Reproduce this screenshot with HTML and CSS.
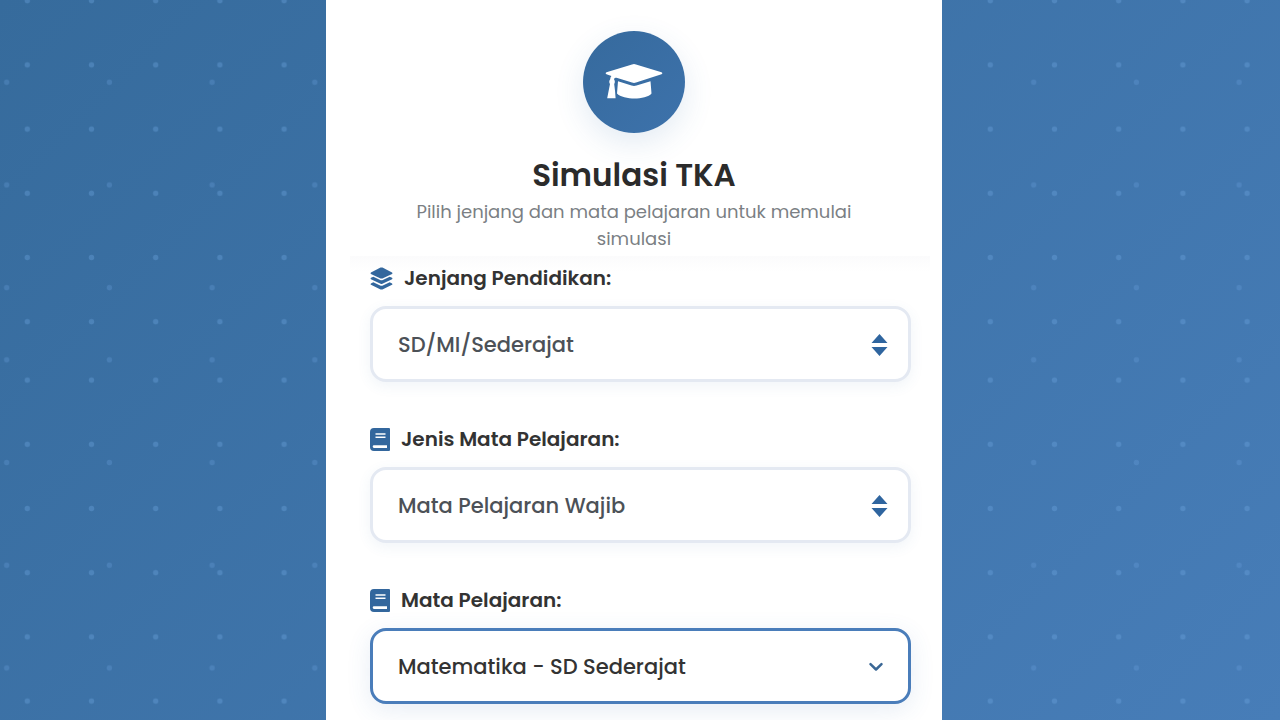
FILE: index.html
```html
<!DOCTYPE html>
<html lang="id">
<head>
    <meta charset="UTF-8">
    <meta name="viewport" content="width=device-width, initial-scale=1.0">
    <title>Simulasi TKA</title>
    <link rel="stylesheet" href="styles.css">
</head>
<body>
    <!-- Dotted backdrop -->
    <svg class="backdrop" aria-hidden="true">
        <defs>
            <pattern id="dots" width="64.2" height="64.2" x="-4.8" y="-31.4" patternUnits="userSpaceOnUse">
                <circle cx="32.1" cy="32.1" r="2.7" fill="#6fa6e0" fill-opacity="0.36"/>
            </pattern>
            <pattern id="dots-wide" width="102.7" height="102.7" x="-44.6" y="30.9" patternUnits="userSpaceOnUse">
                <circle cx="51.3" cy="51.3" r="2.7" fill="#6fa6e0" fill-opacity="0.28"/>
            </pattern>
            <pattern id="dots-low" width="64.2" height="64.2" x="-4.8" y="348" patternUnits="userSpaceOnUse">
                <circle cx="32.1" cy="32.1" r="2.7" fill="#6fa6e0" fill-opacity="0.36"/>
            </pattern>
            <pattern id="dots-wide-low" width="102.7" height="102.7" x="-44.6" y="308.5" patternUnits="userSpaceOnUse">
                <circle cx="51.3" cy="51.3" r="2.7" fill="#6fa6e0" fill-opacity="0.28"/>
            </pattern>
        </defs>
        <rect width="100%" height="342" fill="url(#dots)"/>
        <rect width="100%" height="342" fill="url(#dots-wide)"/>
        <rect y="342" width="100%" height="100%" fill="url(#dots-low)"/>
        <rect y="342" width="100%" height="100%" fill="url(#dots-wide-low)"/>
    </svg>

    <main class="card">
        <header class="card-header">
            <div class="logo">
                <svg viewBox="0 0 58 36" aria-hidden="true">
                    <path d="M27 .4Q29 -.4 31 .4L56.500 8.200Q58.200 9.200 56.500 10.200L31 18.600Q29 19.400 27 18.600L11.500 13.800Q9.200 13.200 9 15.200Q10.600 17.500 9.200 20Q10.200 27 10.600 34.300H2.200Q3.600 27 5 20Q3.400 17.500 5.200 15.200Q5.200 13.400 6.400 12L1.500 10.200Q-.2 9.200 1.500 8.200Z"/>
                    <path d="M13 17.200L26.500 21.600Q29 22.400 31.500 21.600L45.500 17.200L46.500 29.500C44 33 36 34.500 29.500 34.500S15 33 12 29.500Z"/>
                </svg>
            </div>
            <h1>Simulasi TKA</h1>
            <p>Pilih jenjang dan mata pelajaran untuk memulai simulasi</p>
        </header>

        <form class="form">
            <div class="form-group">
                <label for="jenjang">
                    <svg class="icon-layers" viewBox="0 0 24 24" aria-hidden="true">
                        <path d="M1 5.800L11 .6Q12 .2 13 .6L23 5.800Q24 6.500 23 7.200L13 11.900Q12 12.300 11 11.900L1 7.200Q0 6.500 1 5.800Z"/>
                        <path d="M1 11.300L3.500 10.200L10.600 13.500Q12 14 13.400 13.500L20.500 10.200L23 11.300Q24 12 23 12.700L13 17.500Q12 17.900 11 17.500L1 12.700Q0 12 1 11.300Z"/>
                        <path d="M1 17.100L3.500 16L10.600 19.300Q12 19.800 13.400 19.300L20.500 16L23 17.100Q24 17.800 23 18.500L13 23.400Q12 23.800 11 23.400L1 18.500Q0 17.800 1 17.100Z"/>
                    </svg>
                    Jenjang Pendidikan:
                </label>
                <div class="select-wrap">
                    <select id="jenjang">
                        <option>SD/MI/Sederajat</option>
                    </select>
                    <svg class="arrows" viewBox="0 0 16 22" aria-hidden="true">
                        <path d="M8 0L16 9H0ZM8 22L16 13H0Z"/>
                    </svg>
                </div>
            </div>

            <div class="form-group">
                <label for="jenis">
                    <svg class="icon-book" viewBox="0 0 20 23" aria-hidden="true">
                        <path fill-rule="evenodd" d="M4 0H19Q20 0 20 1V22Q20 23 19 23H4Q0 23 0 19V4Q0 0 4 0ZM5.500 5.300V6.700H15.500V5.300ZM5.500 8.600V10H15.500V8.600ZM4 17.200Q2.700 17.200 2.700 18.600T4 20H17V17.200Z"/>
                    </svg>
                    Jenis Mata Pelajaran:
                </label>
                <div class="select-wrap">
                    <select id="jenis">
                        <option>Mata Pelajaran Wajib</option>
                    </select>
                    <svg class="arrows" viewBox="0 0 16 22" aria-hidden="true">
                        <path d="M8 0L16 9H0ZM8 22L16 13H0Z"/>
                    </svg>
                </div>
            </div>

            <div class="form-group">
                <label for="mapel">
                    <svg class="icon-book" viewBox="0 0 20 23" aria-hidden="true">
                        <path fill-rule="evenodd" d="M4 0H19Q20 0 20 1V22Q20 23 19 23H4Q0 23 0 19V4Q0 0 4 0ZM5.500 5.300V6.700H15.500V5.300ZM5.500 8.600V10H15.500V8.600ZM4 17.200Q2.700 17.200 2.700 18.600T4 20H17V17.200Z"/>
                    </svg>
                    Mata Pelajaran:
                </label>
                <div class="select-wrap active">
                    <select id="mapel">
                        <option>Matematika - SD Sederajat</option>
                    </select>
                    <svg class="chevron" viewBox="0 0 16 10" aria-hidden="true">
                        <path d="M2.500 2.200L8 7.500L13.500 2.200"/>
                    </svg>
                </div>
            </div>
        </form>
    </main>
</body>
</html>
```
FILE: styles.css
```css
* {
    box-sizing: border-box;
}
body {
    margin: 0;
    min-height: 100vh;
    display: grid;
    grid-template-columns: 27fr minmax(0, 616px) 28fr;
    font-family: Poppins, Inter, sans-serif;
    background: linear-gradient(135deg, #366b9c, #477db8) fixed;
}
.backdrop {
    position: fixed;
    inset: 0;
    width: 100%;
    height: 100%;
    z-index: -1;
}
.card {
    grid-column: 2;
    background: #fff;
}
.card-header {
    margin: 0 12px 0 24px;
    padding: 31px 60px 4px 48px;
    text-align: center;
}
.logo {
    width: 102px;
    height: 102px;
    margin: 0 auto 22px;
    display: flex;
    align-items: center;
    justify-content: center;
    border-radius: 50%;
    background: linear-gradient(135deg, #366a9d, #3d72ab);
    box-shadow: 0 10px 30px rgba(60, 110, 170, 0.14);
}
.logo svg {
    width: 58px;
    height: 36px;
    fill: #fff;
}
h1 {
    margin: 0 0 3px;
    font-size: 31px;
    font-weight: 600;
    line-height: 40px;
    color: #2b2b2b;
}
.card-header p {
    margin: 0;
    font-size: 18px;
    line-height: 27px;
    color: #7b7f84;
}
.form {
    margin: 0 12px 0 24px;
    padding: 8px 19px 16px 20px;
    background: linear-gradient(#fbfbfc, #fff 16px);
}
.form-group {
    margin-bottom: 43px;
}
.form-group:last-child {
    margin-bottom: 0;
}
label {
    display: flex;
    align-items: center;
    gap: 11px;
    margin-bottom: 14px;
    font-size: 20px;
    font-weight: 600;
    line-height: 28px;
    color: #333;
}
label svg {
    fill: #33679d;
}
.icon-layers {
    width: 23px;
    height: 23px;
}
.icon-book {
    width: 20px;
    height: 23px;
}
.select-wrap {
    position: relative;
}
select {
    display: block;
    width: 100%;
    height: 76px;
    padding: 0 60px 0 25px;
    appearance: none;
    border: 3px solid #e4e9f2;
    border-radius: 16px;
    background: #fff;
    box-shadow: 0 4px 14px rgba(60, 110, 170, 0.08);
    font-family: inherit;
    font-size: 21px;
    font-weight: 500;
    color: #4c5157;
}
.active select {
    border-color: #4a7dba;
    color: #333;
    box-shadow: 0 6px 24px rgba(60, 110, 170, 0.12);
}
.select-wrap svg {
    position: absolute;
    top: 2px;
    bottom: 0;
    margin: auto 0;
    pointer-events: none;
}
.arrows {
    right: 23px;
    width: 17px;
    height: 22px;
    fill: #2f659f;
}
.chevron {
    right: 27px;
    width: 16px;
    height: 10px;
    fill: none;
    stroke: #3a6795;
    stroke-width: 2.5;
    stroke-linecap: round;
    stroke-linejoin: round;
}
```
